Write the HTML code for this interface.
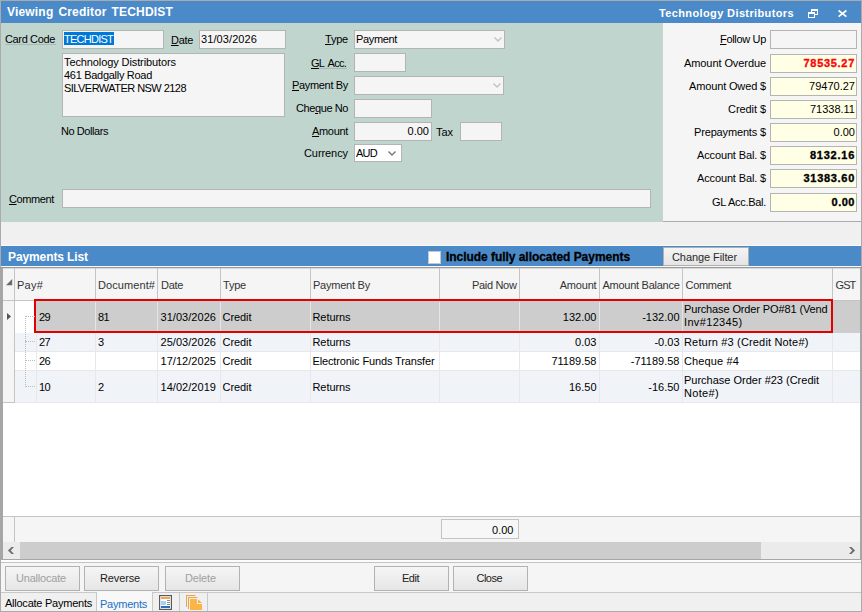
<!DOCTYPE html>
<html><head><meta charset="utf-8"><title>Viewing Creditor TECHDIST</title>
<style>
html,body{margin:0;padding:0;}
body{width:862px;height:612px;position:relative;overflow:hidden;background:#ababab;font-family:"Liberation Sans",sans-serif;}
#r div,#r span,#r svg{position:absolute;}
#r div{box-sizing:content-box;}
.t{white-space:pre;line-height:14px;}
u{text-decoration:underline;text-underline-offset:1px;}
</style></head>
<body><div id="r">
<div style="left:0px;top:0px;width:862px;height:612px;background:#ababab;"></div>
<div style="left:1px;top:1px;width:860px;height:22px;background:#4a8ac9;"></div>
<div style="left:1px;top:23px;width:662px;height:199px;background:#c1d5cf;"></div>
<div style="left:663px;top:23px;width:198px;height:199px;background:#f5f5f5;"></div>
<div style="left:1px;top:222px;width:860px;height:24px;background:#f0f0f0;"></div>
<div style="left:1px;top:245px;width:860px;height:1px;background:#fafafa;"></div>
<div style="left:1px;top:246px;width:860px;height:20px;background:#4a8ac9;"></div>
<div style="left:1px;top:266px;width:860px;height:1px;background:#f8f8f8;"></div>
<span class="t" style="left:7px;top:5px;font-size:12px;font-weight:bold;color:#fff;letter-spacing:0.181px;word-spacing:1.5px;">Viewing Creditor TECHDIST</span>
<span class="t" style="left:659px;top:6px;font-size:11px;font-weight:bold;color:#fff;letter-spacing:0.378px;">Technology Distributors</span>
<svg style="left:806px;top:7px" width="16" height="14" viewBox="0 0 16 14" shape-rendering="crispEdges"><g fill="#fff"><rect x="5" y="2" width="7" height="2"/><rect x="5" y="4" width="1" height="1"/><rect x="11" y="4" width="1" height="4"/><rect x="9" y="7" width="3" height="1"/><rect x="2" y="5" width="7" height="2"/><rect x="2" y="7" width="1" height="4"/><rect x="8" y="7" width="1" height="4"/><rect x="2" y="10" width="7" height="1"/></g></svg>
<svg style="left:836px;top:8px" width="14" height="12" viewBox="0 0 14 12"><path d="M2.600 2.500l7.800 6.100M10.400 2.500l-7.800 6.100" stroke="#fff" stroke-width="1.6" fill="none"/></svg>
<div style="left:62px;top:30px;width:100px;height:17px;background:#f5f5f5;border:1px solid #b4b4b4;"></div>
<div style="left:64px;top:32px;width:50px;height:13px;background:#0078d7;"></div>
<span class="t" style="left:64px;top:32px;font-size:11px;color:#fff;letter-spacing:-0.750px;">TECHDIST</span>
<div style="left:199px;top:30px;width:85px;height:17px;background:#f5f5f5;border:1px solid #b4b4b4;"></div>
<span class="t" style="left:201px;top:32px;font-size:11px;color:#000;letter-spacing:0.094px;">31/03/2026</span>
<div style="left:62px;top:53px;width:221px;height:62px;background:#f5f5f5;border:1px solid #b4b4b4;"></div>
<span class="t" style="left:64px;top:55px;font-size:11px;color:#000;letter-spacing:-0.102px;">Technology Distributors</span>
<span class="t" style="left:64px;top:68px;font-size:11px;color:#000;letter-spacing:-0.292px;">461 Badgally Road</span>
<span class="t" style="left:64px;top:81px;font-size:11px;color:#000;letter-spacing:-0.543px;">SILVERWATER NSW 2128</span>
<span class="t" style="left:61px;top:124px;font-size:11px;color:#000;letter-spacing:-0.436px;">No Dollars</span>
<span class="t" style="left:5px;top:32px;font-size:11px;color:#000;letter-spacing:-0.356px;">Card Code</span>
<div style="left:5px;top:44px;width:51px;height:1px;background:#a9b9b5;"></div>
<div style="left:311px;top:68px;width:36px;height:1px;background:#a9b9b5;"></div>
<span class="t" style="left:171px;top:33px;font-size:11px;color:#000;letter-spacing:-0.312px;"><u>D</u>ate</span>
<span class="t" style="left:325px;top:32px;font-size:11px;color:#000;letter-spacing:-0.215px;"><u>T</u>ype</span>
<span class="t" style="left:311px;top:56px;font-size:11px;color:#000;letter-spacing:-0.730px;word-spacing:2px;"><u>G</u>L Acc.</span>
<span class="t" style="left:292px;top:78px;font-size:11px;color:#000;letter-spacing:-0.331px;"><u>P</u>ayment By</span>
<span class="t" style="left:296px;top:101px;font-size:11px;color:#000;letter-spacing:-0.406px;">Che<u>q</u>ue No</span>
<span class="t" style="left:312px;top:124px;font-size:11px;color:#000;letter-spacing:-0.320px;"><u>A</u>mount</span>
<span class="t" style="left:304px;top:146px;font-size:11px;color:#000;letter-spacing:-0.078px;">Currency</span>
<span class="t" style="left:436px;top:125px;font-size:11px;color:#000;letter-spacing:-0.042px;">Tax</span>
<span class="t" style="left:9px;top:192px;font-size:11px;color:#000;letter-spacing:-0.384px;"><u>C</u>omment</span>
<div style="left:354px;top:30px;width:149px;height:17px;background:#f5f5f5;border:1px solid #b4b4b4;"></div>
<svg style="left:493px;top:36px" width="10" height="8" viewBox="0 0 10 8"><path d="M1.5 1.5L5 5l3.5-3.5" stroke="#c2c2c2" stroke-width="1.4" fill="none"/></svg>
<span class="t" style="left:356px;top:32px;font-size:11px;color:#000;letter-spacing:-0.346px;">Payment</span>
<div style="left:354px;top:53px;width:50px;height:17px;background:#f5f5f5;border:1px solid #b4b4b4;"></div>
<div style="left:354px;top:76px;width:148px;height:17px;background:#f5f5f5;border:1px solid #b4b4b4;"></div>
<svg style="left:492px;top:82px" width="10" height="8" viewBox="0 0 10 8"><path d="M1.5 1.5L5 5l3.5-3.5" stroke="#c2c2c2" stroke-width="1.4" fill="none"/></svg>
<div style="left:354px;top:99px;width:76px;height:17px;background:#f5f5f5;border:1px solid #b4b4b4;"></div>
<div style="left:354px;top:122px;width:76px;height:17px;background:#f5f5f5;border:1px solid #b4b4b4;"></div>
<span class="t" style="right:433.00px;top:124px;font-size:11px;color:#000;letter-spacing:0.000px;">0.00</span>
<div style="left:460px;top:122px;width:40px;height:17px;background:#f5f5f5;border:1px solid #b4b4b4;"></div>
<div style="left:354px;top:144px;width:46px;height:16px;background:#fff;border:1px solid #b4b4b4;"></div>
<svg style="left:387px;top:150px" width="10" height="8" viewBox="0 0 10 8"><path d="M1.5 1.5L5 5l3.5-3.5" stroke="#777" stroke-width="1.4" fill="none"/></svg>
<span class="t" style="left:356px;top:146px;font-size:11px;color:#000;letter-spacing:-0.745px;">AUD</span>
<div style="left:62px;top:189px;width:587px;height:17px;background:#f5f5f5;border:1px solid #b4b4b4;"></div>
<div style="left:770px;top:30px;width:85px;height:17px;background:#f5f5f5;border:1px solid #b4b4b4;"></div>
<span class="t" style="left:720px;top:32px;font-size:11px;color:#000;letter-spacing:-0.323px;"><u>F</u>ollow Up</span>
<div style="left:770px;top:54px;width:85px;height:17px;background:#ffffe6;border:1px solid #b4b4b4;"></div>
<span class="t" style="left:684px;top:56px;font-size:11px;color:#000;letter-spacing:-0.083px;">Amount Overdue</span>
<span class="t" style="left:803.5px;top:56px;font-size:11px;font-weight:bold;color:#f80808;letter-spacing:0.701px;-webkit-text-stroke:0.35px #f80808;">78535.27</span>
<div style="left:770px;top:77px;width:85px;height:17px;background:#ffffe6;border:1px solid #b4b4b4;"></div>
<span class="t" style="left:689px;top:79px;font-size:11px;color:#000;letter-spacing:-0.144px;">Amount Owed $</span>
<span class="t" style="right:7.00px;top:79px;font-size:11px;color:#000;letter-spacing:0.000px;">79470.27</span>
<div style="left:770px;top:100px;width:85px;height:17px;background:#ffffe6;border:1px solid #b4b4b4;"></div>
<span class="t" style="left:728px;top:102px;font-size:11px;color:#000;letter-spacing:-0.066px;">Credit $</span>
<span class="t" style="right:7.00px;top:102px;font-size:11px;color:#000;letter-spacing:0.000px;">71338.11</span>
<div style="left:770px;top:123px;width:85px;height:17px;background:#ffffe6;border:1px solid #b4b4b4;"></div>
<span class="t" style="left:694px;top:125px;font-size:11px;color:#000;letter-spacing:-0.153px;">Prepayments $</span>
<span class="t" style="right:7.00px;top:125px;font-size:11px;color:#000;letter-spacing:0.000px;">0.00</span>
<div style="left:770px;top:146px;width:85px;height:17px;background:#ffffe6;border:1px solid #b4b4b4;"></div>
<span class="t" style="left:697px;top:148px;font-size:11px;color:#000;letter-spacing:-0.138px;">Account Bal. $</span>
<span class="t" style="left:810px;top:148px;font-size:11px;font-weight:bold;color:#000;letter-spacing:0.748px;-webkit-text-stroke:0.35px #000;">8132.16</span>
<div style="left:770px;top:169px;width:85px;height:17px;background:#ffffe6;border:1px solid #b4b4b4;"></div>
<span class="t" style="left:697px;top:171px;font-size:11px;color:#000;letter-spacing:-0.138px;">Account Bal. $</span>
<span class="t" style="left:803.5px;top:171px;font-size:11px;font-weight:bold;color:#000;letter-spacing:0.701px;-webkit-text-stroke:0.35px #000;">31383.60</span>
<div style="left:770px;top:193px;width:85px;height:17px;background:#ffffe6;border:1px solid #b4b4b4;"></div>
<span class="t" style="left:712px;top:195px;font-size:11px;color:#000;letter-spacing:-0.278px;">GL Acc.Bal.</span>
<span class="t" style="left:831.5px;top:195px;font-size:11px;font-weight:bold;color:#000;letter-spacing:0.520px;-webkit-text-stroke:0.35px #000;">0.00</span>
<div style="left:663px;top:221px;width:198px;height:1px;background:#acacac;"></div>
<span class="t" style="left:8px;top:250px;font-size:12px;font-weight:bold;color:#fff;letter-spacing:-0.106px;">Payments List</span>
<div style="left:428px;top:251px;width:11px;height:11px;background:#fff;border:1px solid #c8c8c8;"></div>
<span class="t" style="left:446px;top:250px;font-size:12px;font-weight:bold;color:#000;letter-spacing:-0.043px;-webkit-text-stroke:0.3px #000;">Include fully allocated Payments</span>
<div style="left:663px;top:247px;width:84px;height:17px;background:linear-gradient(#f4f4f4,#e4e4e4);border:1px solid #b0b0b0;"></div>
<span class="t" style="left:672px;top:250px;font-size:11px;color:#2a2a2a;letter-spacing:-0.081px;">Change Filter</span>
<div style="left:0px;top:267px;width:862px;height:293px;background:#a6a6a6;"></div>
<div style="left:0px;top:267px;width:862px;height:1px;background:#999;"></div>
<div style="left:3px;top:268px;width:857px;height:291px;background:#fff;"></div>
<div style="left:3px;top:268px;width:857px;height:32px;background:#f5f5f5;"></div>
<div style="left:3px;top:268px;width:857px;height:1px;background:#dadada;"></div>
<div style="left:3px;top:300px;width:857px;height:1px;background:#c4c4c4;"></div>
<div style="left:14px;top:268px;width:1px;height:32px;background:#c4c4c4;"></div>
<div style="left:95px;top:268px;width:1px;height:32px;background:#c4c4c4;"></div>
<div style="left:157px;top:268px;width:1px;height:32px;background:#c4c4c4;"></div>
<div style="left:220px;top:268px;width:1px;height:32px;background:#c4c4c4;"></div>
<div style="left:310px;top:268px;width:1px;height:32px;background:#c4c4c4;"></div>
<div style="left:439px;top:268px;width:1px;height:32px;background:#c4c4c4;"></div>
<div style="left:519px;top:268px;width:1px;height:32px;background:#c4c4c4;"></div>
<div style="left:599px;top:268px;width:1px;height:32px;background:#c4c4c4;"></div>
<div style="left:682px;top:268px;width:1px;height:32px;background:#c4c4c4;"></div>
<div style="left:832px;top:268px;width:1px;height:32px;background:#c4c4c4;"></div>
<div style="left:3px;top:301px;width:11px;height:101px;background:#f5f5f5;"></div>
<div style="left:14px;top:301px;width:1px;height:102px;background:#c4c4c4;"></div>
<div style="left:3px;top:402px;width:12px;height:1px;background:#c4c4c4;"></div>
<div style="left:36px;top:301px;width:824px;height:32px;background:#cdcdcd;"></div>
<div style="left:15px;top:333px;width:845px;height:19px;background:#f0f3f8;"></div>
<div style="left:15px;top:352px;width:845px;height:19px;background:#fff;"></div>
<div style="left:15px;top:371px;width:845px;height:31px;background:#f0f3f8;"></div>
<div style="left:15px;top:301px;width:21px;height:32px;background:#fff;"></div>
<div style="left:95px;top:301px;width:1px;height:32px;background:#e4e4e4;"></div>
<div style="left:95px;top:333px;width:1px;height:70px;background:#e6e8ec;"></div>
<div style="left:157px;top:301px;width:1px;height:32px;background:#e4e4e4;"></div>
<div style="left:157px;top:333px;width:1px;height:70px;background:#e6e8ec;"></div>
<div style="left:220px;top:301px;width:1px;height:32px;background:#e4e4e4;"></div>
<div style="left:220px;top:333px;width:1px;height:70px;background:#e6e8ec;"></div>
<div style="left:310px;top:301px;width:1px;height:32px;background:#e4e4e4;"></div>
<div style="left:310px;top:333px;width:1px;height:70px;background:#e6e8ec;"></div>
<div style="left:439px;top:301px;width:1px;height:32px;background:#e4e4e4;"></div>
<div style="left:439px;top:333px;width:1px;height:70px;background:#e6e8ec;"></div>
<div style="left:519px;top:301px;width:1px;height:32px;background:#e4e4e4;"></div>
<div style="left:519px;top:333px;width:1px;height:70px;background:#e6e8ec;"></div>
<div style="left:599px;top:301px;width:1px;height:32px;background:#e4e4e4;"></div>
<div style="left:599px;top:333px;width:1px;height:70px;background:#e6e8ec;"></div>
<div style="left:682px;top:301px;width:1px;height:32px;background:#e4e4e4;"></div>
<div style="left:682px;top:333px;width:1px;height:70px;background:#e6e8ec;"></div>
<div style="left:832px;top:301px;width:1px;height:32px;background:#e4e4e4;"></div>
<div style="left:832px;top:333px;width:1px;height:70px;background:#e6e8ec;"></div>
<div style="left:36px;top:333px;width:1px;height:70px;background:#e6e8ec;"></div>
<div style="left:15px;top:351px;width:845px;height:1px;background:#e6e8ec;"></div>
<div style="left:15px;top:370px;width:845px;height:1px;background:#e6e8ec;"></div>
<div style="left:15px;top:402px;width:845px;height:1px;background:#e6e8ec;"></div>
<div style="left:34px;top:299px;width:795px;height:30px;border:2px solid #e00000;background:none;"></div>
<div style="left:36px;top:301px;width:795px;height:1px;background:#cdcdcd;"></div>
<div style="left:25px;top:316px;width:0;height:71px;border-left:1px dotted #bcbcbc"></div>
<div style="left:25px;top:316px;width:10px;height:0;border-top:1px dotted #bcbcbc"></div>
<div style="left:25px;top:341px;width:10px;height:0;border-top:1px dotted #bcbcbc"></div>
<div style="left:25px;top:360px;width:10px;height:0;border-top:1px dotted #bcbcbc"></div>
<div style="left:25px;top:386px;width:10px;height:0;border-top:1px dotted #bcbcbc"></div>
<svg style="left:5px;top:278px" width="9" height="9" viewBox="0 0 9 9"><path d="M7.200 1v6.200H1z" fill="#6a6a6a"/></svg>
<svg style="left:6px;top:312px" width="6" height="9" viewBox="0 0 6 9"><path d="M1 1l4 3.5L1 8z" fill="#555"/></svg>
<span class="t" style="left:17px;top:278px;font-size:11px;color:#333;letter-spacing:0.230px;">Pay#</span>
<span class="t" style="left:98px;top:278px;font-size:11px;color:#333;letter-spacing:0.082px;">Document#</span>
<span class="t" style="left:161px;top:278px;font-size:11px;color:#333;letter-spacing:-0.312px;">Date</span>
<span class="t" style="left:223px;top:278px;font-size:11px;color:#333;letter-spacing:-0.215px;">Type</span>
<span class="t" style="left:313px;top:278px;font-size:11px;color:#333;letter-spacing:-0.231px;">Payment By</span>
<span class="t" style="left:472px;top:278px;font-size:11px;color:#333;letter-spacing:-0.322px;">Paid Now</span>
<span class="t" style="left:559.7px;top:278px;font-size:11px;color:#333;letter-spacing:-0.187px;">Amount</span>
<span class="t" style="left:602.5px;top:278px;font-size:11px;color:#333;letter-spacing:-0.266px;">Amount Balance</span>
<span class="t" style="left:685.5px;top:278px;font-size:11px;color:#333;letter-spacing:-0.312px;">Comment</span>
<span class="t" style="left:835.5px;top:278px;font-size:11px;color:#333;letter-spacing:-0.900px;">GST</span>
<span class="t" style="left:39px;top:310px;font-size:11px;color:#000;letter-spacing:-0.625px;">29</span>
<span class="t" style="left:98px;top:310px;font-size:11px;color:#000;letter-spacing:-0.625px;">81</span>
<span class="t" style="left:160.5px;top:310px;font-size:11px;color:#000;letter-spacing:0.044px;">31/03/2026</span>
<span class="t" style="left:222.5px;top:310px;font-size:11px;color:#000;letter-spacing:-0.057px;">Credit</span>
<span class="t" style="left:312.5px;top:310px;font-size:11px;color:#000;letter-spacing:-0.076px;">Returns</span>
<span class="t" style="right:265.50px;top:310px;font-size:11px;color:#000;letter-spacing:0.000px;">132.00</span>
<span class="t" style="right:182.50px;top:310px;font-size:11px;color:#000;letter-spacing:0.000px;">-132.00</span>
<span class="t" style="left:39px;top:335px;font-size:11px;color:#000;letter-spacing:-0.625px;">27</span>
<span class="t" style="left:98px;top:335px;font-size:11px;color:#000;letter-spacing:-0.625px;">3</span>
<span class="t" style="left:160.5px;top:335px;font-size:11px;color:#000;letter-spacing:0.044px;">25/03/2026</span>
<span class="t" style="left:222.5px;top:335px;font-size:11px;color:#000;letter-spacing:-0.057px;">Credit</span>
<span class="t" style="left:312.5px;top:335px;font-size:11px;color:#000;letter-spacing:-0.076px;">Returns</span>
<span class="t" style="right:265.50px;top:335px;font-size:11px;color:#000;letter-spacing:0.000px;">0.03</span>
<span class="t" style="right:182.50px;top:335px;font-size:11px;color:#000;letter-spacing:0.000px;">-0.03</span>
<span class="t" style="left:39px;top:354px;font-size:11px;color:#000;letter-spacing:-0.625px;">26</span>
<span class="t" style="left:160.5px;top:354px;font-size:11px;color:#000;letter-spacing:0.044px;">17/12/2025</span>
<span class="t" style="left:222.5px;top:354px;font-size:11px;color:#000;letter-spacing:-0.057px;">Credit</span>
<span class="t" style="left:312.5px;top:354px;font-size:11px;color:#000;letter-spacing:-0.134px;">Electronic Funds Transfer</span>
<span class="t" style="right:265.50px;top:354px;font-size:11px;color:#000;letter-spacing:0.000px;">71189.58</span>
<span class="t" style="right:182.50px;top:354px;font-size:11px;color:#000;letter-spacing:0.000px;">-71189.58</span>
<span class="t" style="left:39px;top:380px;font-size:11px;color:#000;letter-spacing:-0.625px;">10</span>
<span class="t" style="left:98px;top:380px;font-size:11px;color:#000;letter-spacing:-0.625px;">2</span>
<span class="t" style="left:160.5px;top:380px;font-size:11px;color:#000;letter-spacing:0.044px;">14/02/2019</span>
<span class="t" style="left:222.5px;top:380px;font-size:11px;color:#000;letter-spacing:-0.057px;">Credit</span>
<span class="t" style="left:312.5px;top:380px;font-size:11px;color:#000;letter-spacing:-0.076px;">Returns</span>
<span class="t" style="right:265.50px;top:380px;font-size:11px;color:#000;letter-spacing:0.000px;">16.50</span>
<span class="t" style="right:182.50px;top:380px;font-size:11px;color:#000;letter-spacing:0.000px;">-16.50</span>
<span class="t" style="left:684px;top:302px;font-size:11px;color:#000;letter-spacing:-0.125px;">Purchase Order PO#81 (Vend</span>
<span class="t" style="left:684px;top:315px;font-size:11px;color:#000;letter-spacing:0.345px;">Inv#12345)</span>
<span class="t" style="left:684px;top:335px;font-size:11px;color:#000;letter-spacing:0.169px;">Return #3 (Credit Note#)</span>
<span class="t" style="left:684px;top:354px;font-size:11px;color:#000;letter-spacing:0.130px;">Cheque #4</span>
<span class="t" style="left:684px;top:373px;font-size:11px;color:#000;letter-spacing:-0.005px;">Purchase Order #23 (Credit</span>
<span class="t" style="left:684px;top:386px;font-size:11px;color:#000;letter-spacing:0.328px;">Note#)</span>
<div style="left:3px;top:516px;width:857px;height:1px;background:#c4c4c4;"></div>
<div style="left:3px;top:517px;width:857px;height:25px;background:#f5f5f5;"></div>
<div style="left:14px;top:517px;width:1px;height:25px;background:#c4c4c4;"></div>
<div style="left:441px;top:519px;width:76px;height:18px;background:#f7f7f7;border:1px solid #c4c4c4;"></div>
<span class="t" style="right:348.50px;top:523px;font-size:11px;color:#000;letter-spacing:0.000px;">0.00</span>
<div style="left:3px;top:542px;width:857px;height:17px;background:#ebebeb;"></div>
<div style="left:20px;top:542px;width:741px;height:17px;background:#cdcdcd;"></div>
<svg style="left:6px;top:545px" width="10" height="11" viewBox="0 0 10 11"><path d="M8 2H5.500L1.900 5.500 5.500 9H8L4.700 5.500z" fill="#6e6e6e"/></svg>
<svg style="left:847px;top:545px" width="10" height="11" viewBox="0 0 10 11"><path d="M2 2h2.500L8.100 5.500 4.500 9H2l3.300-3.500z" fill="#6e6e6e"/></svg>
<div style="left:1px;top:560px;width:860px;height:2px;background:#fcfcfc;"></div>
<div style="left:1px;top:562px;width:860px;height:1px;background:#c4c4c4;"></div>
<div style="left:1px;top:563px;width:860px;height:29px;background:#f5f5f5;"></div>
<div style="left:5px;top:566px;width:73px;height:23px;background:linear-gradient(#f5f5f5,#e6e6e6);border:1px solid #b2b2b2;"></div>
<span class="t" style="left:16px;top:571px;font-size:11px;color:#a0a0a0;letter-spacing:-0.198px;">Unallocate</span>
<div style="left:84px;top:566px;width:73px;height:23px;background:linear-gradient(#f5f5f5,#e6e6e6);border:1px solid #b2b2b2;"></div>
<span class="t" style="left:100px;top:571px;font-size:11px;color:#222;letter-spacing:-0.138px;">Reverse</span>
<div style="left:165px;top:566px;width:73px;height:23px;background:linear-gradient(#f5f5f5,#e6e6e6);border:1px solid #b2b2b2;"></div>
<span class="t" style="left:185px;top:571px;font-size:11px;color:#a0a0a0;letter-spacing:-0.133px;">Delete</span>
<div style="left:374px;top:566px;width:73px;height:23px;background:linear-gradient(#f5f5f5,#e6e6e6);border:1px solid #b2b2b2;"></div>
<span class="t" style="left:402px;top:571px;font-size:11px;color:#222;letter-spacing:-0.492px;">Edit</span>
<div style="left:453px;top:566px;width:73px;height:23px;background:linear-gradient(#f5f5f5,#e6e6e6);border:1px solid #b2b2b2;"></div>
<span class="t" style="left:476.5px;top:571px;font-size:11px;color:#222;letter-spacing:-0.525px;">Close</span>
<div style="left:1px;top:592px;width:860px;height:19px;background:#f0f0f0;"></div>
<div style="left:1px;top:592px;width:860px;height:1px;background:#c8c8c8;"></div>
<div style="left:97px;top:592px;width:55px;height:19px;background:#f8f8f8;"></div>
<div style="left:96px;top:593px;width:1px;height:18px;background:#c8c8c8;"></div>
<div style="left:152px;top:593px;width:1px;height:18px;background:#c8c8c8;"></div>
<div style="left:179px;top:593px;width:1px;height:18px;background:#c8c8c8;"></div>
<div style="left:207px;top:593px;width:1px;height:18px;background:#c8c8c8;"></div>
<span class="t" style="left:5px;top:596px;font-size:11px;color:#000;letter-spacing:-0.242px;">Allocate Payments</span>
<span class="t" style="left:100px;top:597px;font-size:11px;color:#1c6fc4;letter-spacing:-0.240px;">Payments</span>
<svg style="left:159px;top:595px" width="13" height="15" viewBox="0 0 13 15"><rect x="0.600" y="0.600" width="11.800" height="13.800" fill="#fff" stroke="#5a5a5a" stroke-width="1.200"/><rect x="2" y="2" width="9" height="2" fill="#eaa94a"/><rect x="2" y="6" width="5" height="4" fill="#a4d2f0"/><path d="M8 5.500h3M8 7.500h3M8 9.500h3" stroke="#8a8a8a"/><rect x="2" y="11" width="9" height="2" fill="#2d6cb8"/></svg>
<svg style="left:185px;top:594px" width="18" height="17" viewBox="0 0 18 17"><path d="M1 1h9.500v1H2v11H1z" fill="#e9a545"/><path d="M3 3h9.300v1H4v11H3z" fill="#e9a545"/><path d="M5 5h7v5h5v6H5z" fill="#fbb445"/><path d="M13 5.200l3.900 3.800H13z" fill="#f7ad40"/></svg>
</div></body></html>
